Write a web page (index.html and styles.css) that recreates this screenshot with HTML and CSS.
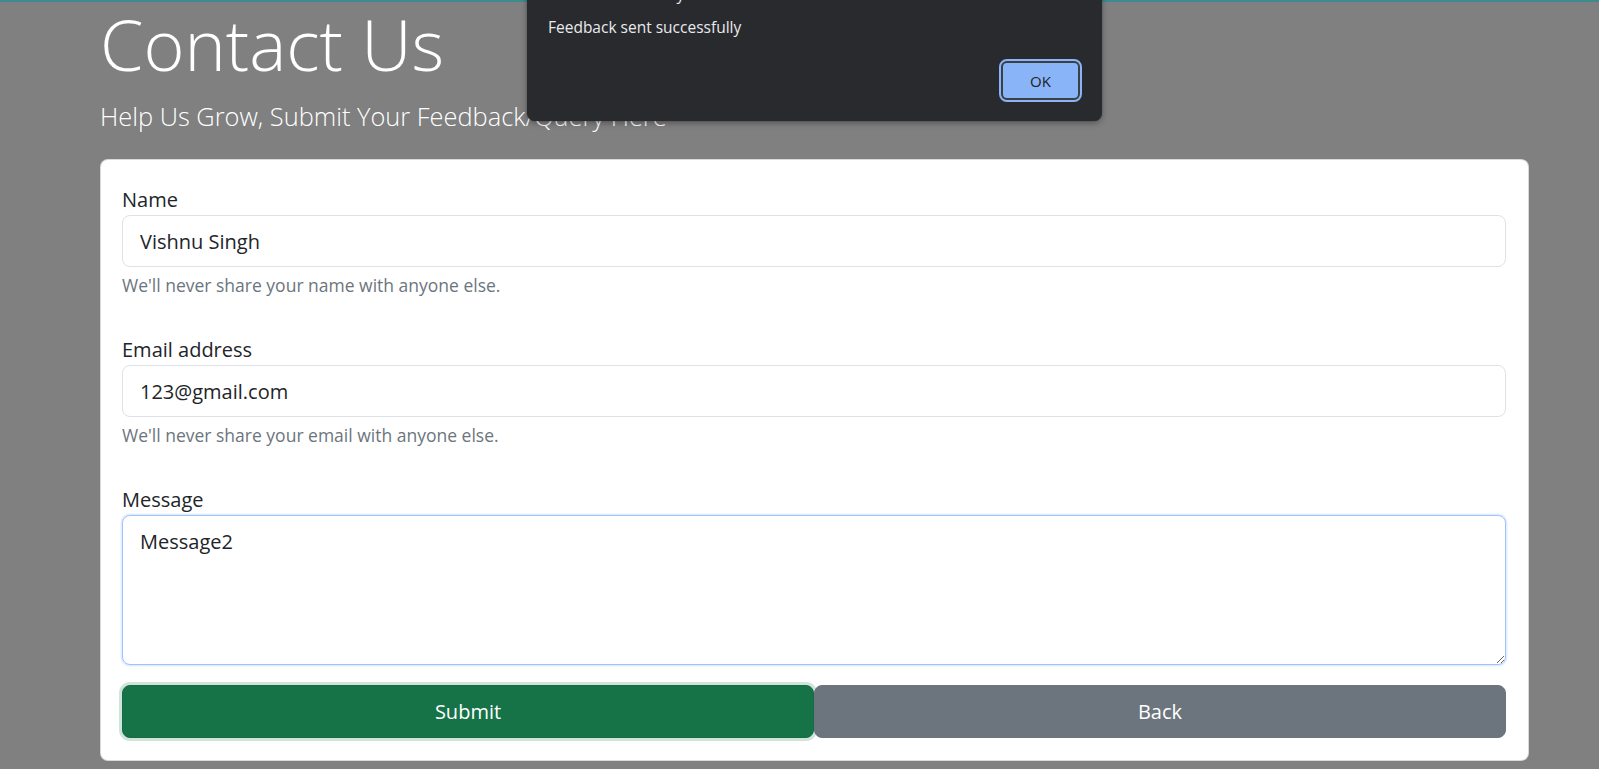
FILE: index.html
```html
<!DOCTYPE html>
<html lang="en">
<head>
<meta charset="utf-8">
<title>Contact Us</title>
<link rel="stylesheet" href="styles.css">
</head>
<body>
<div class="topline"></div>
<main class="container">
  <h1 class="title">Contact Us</h1>
  <p class="lead">Help Us Grow, Submit Your Feedback/Query Here</p>
  <form class="card">
    <div class="group">
      <label class="label" for="name">Name</label>
      <input class="control" id="name" type="text" value="Vishnu Singh">
      <div class="help">We'll never share your name with anyone else.</div>
    </div>
    <div class="group">
      <label class="label" for="email">Email address</label>
      <input class="control" id="email" type="email" value="123@gmail.com">
      <div class="help">We'll never share your email with anyone else.</div>
    </div>
    <div class="group group-msg">
      <label class="label" for="msg">Message</label>
      <textarea class="control area" id="msg">Message2</textarea>
    </div>
    <div class="actions">
      <button type="button" class="btn btn-submit">Submit</button>
      <button type="button" class="btn btn-back">Back</button>
    </div>
  </form>
</main>

<div class="dialog" role="alertdialog">
  <div class="dialog-title">localhost:3000 says</div>
  <div class="dialog-msg">Feedback sent successfully</div>
  <div class="dialog-actions">
    <button type="button" class="ok">OK</button>
  </div>
</div>
</body>
</html>
```
FILE: styles.css
```css
* { box-sizing: border-box; }

html, body {
  margin: 0;
  padding: 0;
}

body {
  background: #808080;
  font-family: "Open Sans", "Noto Sans", "Liberation Sans", sans-serif;
  color: #212529;
  overflow: hidden;
}

.topline {
  height: 2px;
  background: #3e8a91;
}

.container {
  margin-left: 100px;
  width: 1429px;
}

.title {
  margin: 0;
  font-size: 70px;
  font-weight: 300;
  line-height: 84px;
  color: #ffffff;
}

.lead {
  margin: 12px 0 0 0;
  font-size: 25.4px;
  font-weight: 300;
  line-height: 37px;
  color: #ffffff;
}

.card {
  margin-top: 24px;
  background: #ffffff;
  border: 1px solid rgba(0, 0, 0, 0.15);
  border-radius: 8px;
  padding: 23px 22px 21px 21px;
  height: 602px;
  display: flex;
  flex-direction: column;
}

.group {
  display: flex;
  flex-direction: column;
  margin-bottom: 35px;
}

.group-msg {
  margin-bottom: 20px;
}

.label {
  font-size: 20px;
  line-height: 30px;
  padding-top: 2px;
  color: #212529;
}

.control {
  display: block;
  width: 100%;
  height: 52px;
  padding: 9px 17px;
  font-family: inherit;
  font-size: 20px;
  line-height: 30px;
  color: #212529;
  background: #ffffff;
  border: 1px solid #dee2e6;
  border-radius: 8px;
  outline: none;
}

.area {
  height: 150px;
  padding-top: 11px;
  resize: vertical;
  border-color: #9fc3f8;
  box-shadow: 0 0 0 1.5px rgba(13, 110, 253, 0.12);
}

.help {
  margin-top: 5px;
  font-size: 17.5px;
  line-height: 26px;
  color: #6c757d;
}

.actions {
  display: flex;
}

.btn {
  flex: 1 1 0;
  height: 53px;
  border: 1px solid transparent;
  border-radius: 8px;
  font-family: inherit;
  font-size: 20px;
  color: #ffffff;
  cursor: pointer;
}

.btn-submit {
  background: #157347;
  border-color: #146c43;
  box-shadow: 0 0 0 3px #cfe5d9;
}

.btn-back {
  background: #6c757d;
  border-color: #6c757d;
  position: relative;
}

/* Browser alert dialog overlaying the page */
.dialog {
  position: absolute;
  left: 527px;
  top: -30px;
  width: 575px;
  height: 151px;
  background: #292a2d;
  border-radius: 8px;
  box-shadow: 0 2px 6px rgba(0, 0, 0, 0.35), 0 0 1px rgba(0, 0, 0, 0.5);
  padding: 14px 20px 0 21px;
  color: #e8eaed;
}

.dialog-title {
  font-size: 16px;
  line-height: 20px;
  color: #e8eaed;
}

.dialog-msg {
  margin-top: 12px;
  font-size: 15.5px;
  line-height: 22px;
  color: #e8eaed;
}

.dialog-actions {
  display: flex;
  justify-content: flex-end;
  margin-top: 23px;
  padding-right: 2px;
}

.ok {
  width: 79px;
  height: 39px;
  background: #8ab4f8;
  border: 2px solid #3c4043;
  outline: 2px solid #8ab4f8;
  outline-offset: 0;
  border-radius: 6px;
  font-family: inherit;
  font-size: 15px;
  color: #202124;
}
```
